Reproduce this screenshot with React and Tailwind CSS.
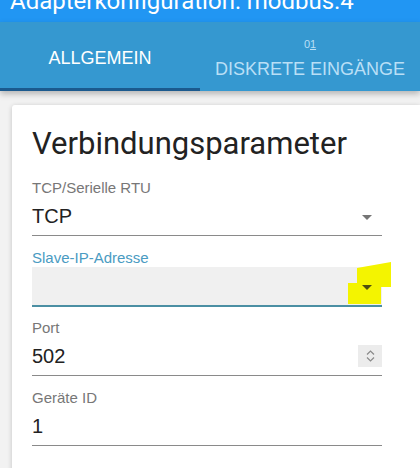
import React from "react";

const Arrow = ({ color = "#757575" }) => (
  <svg width="10" height="5" viewBox="0 0 10 5" className="block">
    <path d="M0 0 L5 5 L10 0 Z" fill={color} />
  </svg>
);

const Label = ({ children, className = "" }) => (
  <div className={"h-[18px] text-[15px] leading-[18px] " + className} style={{ fontFamily: '"Liberation Sans", Arial, sans-serif' }}>
    {children}
  </div>
);

export default function App() {
  const sans = { fontFamily: '"Liberation Sans", Arial, sans-serif' };
  return (
    <div className="w-[420px] h-[468px] overflow-hidden bg-[#f2f2f2]" style={sans}>
      {/* title bar */}
      <div className="h-[22px] bg-[#2196f3] overflow-hidden">
        <div className="pl-[10px] mt-[-11px] text-[24px] leading-[24px] text-white whitespace-nowrap" style={{ fontFamily: "Roboto, sans-serif" }}>
          Adapterkonfiguration: modbus.4
        </div>
      </div>
      {/* tabs */}
      <div className="relative z-10 h-[69px] bg-[#3598d0] flex shadow-[0_3px_6px_rgba(0,0,0,0.25)]">
        <div className="w-[200px] flex flex-col items-center justify-center relative text-white text-[18px]">
          <span className="mt-[3px]">ALLGEMEIN</span>
          <div className="absolute left-0 right-0 bottom-0 h-[3px] bg-[#1b5a8e]" />
        </div>
        <div className="flex-1 flex flex-col items-center pt-[15px] text-[#b9dff6]">
          <span className="text-[11px] leading-[14px]">0<span className="underline">1</span></span>
          <span className="text-[18px] leading-[22px] mt-[7px]">DISKRETE EINGÄNGE</span>
        </div>
      </div>
      {/* content */}
      <div className="pl-[12px] pt-[14px]">
        <div className="bg-white shadow-[0_1px_5px_rgba(0,0,0,0.2)] rounded-tl-[3px] pl-[20px] pr-[50px] pt-[21px] h-[400px]">
          <div className="text-[31px] leading-[36px] text-[#222]" style={{ fontFamily: "Roboto, sans-serif" }}>
            Verbindungsparameter
          </div>
          <div className="w-[350px] mt-[17px] flex flex-col">
            {/* field 1 */}
            <Label className="text-[#777]">TCP/Serielle RTU</Label>
            <div className="h-[39px] border-b border-[#8a8a8a] flex items-start justify-between pt-[7px]">
              <span className="text-[20px] leading-[24px] text-[#222]">TCP</span>
              <span className="mt-[11px] mr-[10px]"><Arrow /></span>
            </div>
            {/* field 2 */}
            <Label className="text-[#4a9bc2] mt-[13px]">Slave-IP-Adresse</Label>
            <div className="relative h-[40px] bg-[#f0f0f0] border-b-2 border-[#4b8fa3] flex items-start justify-end">
              <div className="absolute left-[325px] top-[-5px] w-[34px] h-[25px] bg-[#f4f400]" style={{ clipPath: "polygon(0 24%, 100% 0, 100% 100%, 0 100%)" }} />
              <div className="absolute left-[316px] top-[16px] w-[33px] h-[21px] bg-[#f4f400]" />
              <span className="relative mt-[18px] mr-[10px]"><Arrow color="#4e4e10" /></span>
            </div>
            {/* field 3 */}
            <Label className="text-[#777] mt-[12px]">Port</Label>
            <div className="h-[39px] border-b border-[#8a8a8a] flex items-start justify-between pt-[7px]">
              <span className="text-[20px] leading-[24px] text-[#222]">502</span>
              <div className="mt-[1px] w-[24px] h-[22px] bg-[#ececec] flex flex-col items-center justify-center gap-[2px]">
                <svg width="9" height="5" viewBox="0 0 9 5"><path d="M1 4.5 L4.5 1 L8 4.5" stroke="#8a8a8a" strokeWidth="1.2" fill="none" /></svg>
                <svg width="9" height="5" viewBox="0 0 9 5"><path d="M1 0.5 L4.5 4 L8 0.5" stroke="#8a8a8a" strokeWidth="1.2" fill="none" /></svg>
              </div>
            </div>
            {/* field 4 */}
            <Label className="text-[#777] mt-[13px]">Geräte ID</Label>
            <div className="h-[39px] border-b border-[#8a8a8a] flex items-start pt-[7px]">
              <span className="text-[20px] leading-[24px] text-[#222]">1</span>
            </div>
          </div>
        </div>
      </div>
    </div>
  );
}
